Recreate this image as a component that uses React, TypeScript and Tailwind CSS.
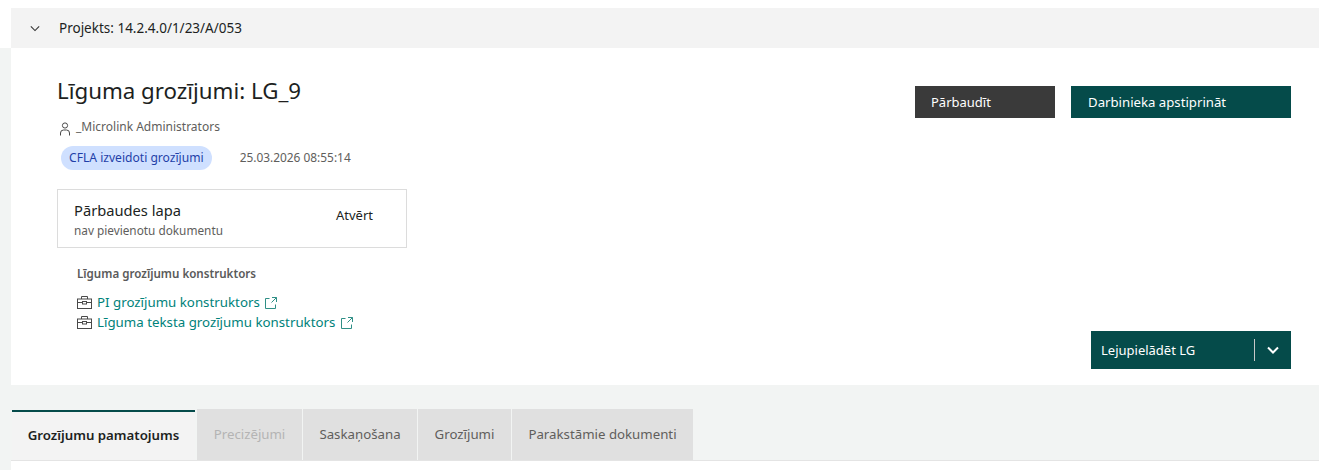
import React from "react";

const font = { fontFamily: '"Noto Sans", "Open Sans", sans-serif' };

function Chevron({ className }: { className?: string }) {
  return (
    <svg viewBox="0 0 12 8" className={className} fill="none" stroke="currentColor" strokeWidth="1.3">
      <path d="M1 1.5 L6 6.5 L11 1.5" />
    </svg>
  );
}

function Toolbox() {
  return (
    <svg width="15" height="13" viewBox="0 0 15 13" fill="none" stroke="#4a4a4a" strokeWidth="1" className="shrink-0 mt-[-1px]">
      <path d="M4.5 3 V0.5 H10.5 V3" />
      <rect x="0.5" y="3" width="14" height="9.5" />
      <path d="M0.5 6.5 H5.5 M9.5 6.5 H14.5" />
      <rect x="5.5" y="5.5" width="4" height="2.5" />
    </svg>
  );
}

function External() {
  return (
    <svg width="12" height="12" viewBox="0 0 12 12" fill="none" stroke="#2f8f86" strokeWidth="1" className="shrink-0 block">
      <path d="M4.5 1.5 H0.5 V11.5 H10.5 V7.5" />
      <path d="M7 0.5 H11.5 V5 M11.5 0.5 L6.5 5.5" />
    </svg>
  );
}

function Tab({ label, active, disabled, w }: { label: string; active?: boolean; disabled?: boolean; w: string }) {
  if (active) {
    return (
      <div className={`${w} h-[50px] mt-px mr-px bg-[#f3f3f3] border-t-2 border-[#054b4a] text-[13.25px] font-semibold text-[#201f1e] flex items-center justify-center`}>
        {label}
      </div>
    );
  }
  return (
    <div className={`${w} h-[51px] pt-px bg-[#e0e0e0] text-[13.25px] flex items-center justify-center ${disabled ? "text-[#b4b4b4]" : "text-[#605e5c]"}`}>
      {label}
    </div>
  );
}

export default function App() {
  return (
    <div style={font} className="w-[1319px] h-[470px] overflow-hidden bg-white">
      <div className="pt-2 pl-[11px]">
        <div className="h-10 bg-[#f3f3f3] flex items-center pl-[19px] text-[13.5px] text-[#201f1e]">
          <Chevron className="w-[10px] h-[7px] text-[#333333]" />
          <span className="ml-[19px] pt-px">Projekts: 14.2.4.0/1/23/A/053</span>
        </div>
      </div>

      <div className="bg-[#f2f4f3] pl-[11px] h-[422px] flex flex-col">
        <div className="h-[337px] bg-white flex justify-between pl-[46px] pr-[28px] pt-[38px] pb-4">
          <div className="flex flex-col">
            <h1 className="text-[22.3px] leading-[32px] -mt-[23px] pt-[12px] text-[#201f1e] h-[44px]">Līguma grozījumi: LG_9</h1>
            <div className="flex items-center mt-[10px] h-5 text-[12px] text-[#605e5c]">
              <svg width="10" height="14" viewBox="0 0 10 14" fill="none" stroke="#4a4a4a" className="ml-[3px] mt-[3px]">
                <circle cx="5" cy="3.5" r="2.6" />
                <path d="M0.5 13.5 V11 A3 3 0 0 1 3.5 8 H6.5 A3 3 0 0 1 9.5 11 V13.5" />
              </svg>
              <span className="ml-[6px]">_Microlink Administrators</span>
            </div>
            <div className="flex items-center mt-[9px] ml-[4px]">
              <span className="h-6 px-[8px] rounded-full bg-[#cfe0ff] text-[#1f3fa8] text-[12.1px] flex items-center">CFLA izveidoti grozījumi</span>
              <span className="ml-[28px] text-[11.9px] text-[#605e5c]">25.03.2026 08:55:14</span>
            </div>

            <div className="mt-[19px] w-[350px] h-[59px] border border-[#dcdcdc] flex items-center justify-between pl-4 pr-[33px]">
              <div>
                <div className="text-[14.7px] leading-[20px] text-[#201f1e]">Pārbaudes lapa</div>
                <div className="text-[11.8px] leading-[16px] text-[#605e5c] mt-[2px]">nav pievienotu dokumentu</div>
              </div>
              <span className="text-[13px] text-[#201f1e] mb-[6px]">Atvērt</span>
            </div>

            <div className="ml-5 mt-[18px] text-[11.6px] leading-4 font-semibold text-[#5a5a5a]">Līguma grozījumu konstruktors</div>
            <div className="ml-5 mt-[11px] flex items-center h-5 text-[13.3px] text-[#00827a]">
              <Toolbox />
              <span className="ml-[5px]">PI grozījumu konstruktors</span>
              <span className="ml-[5px]"><External /></span>
            </div>
            <div className="ml-5 flex items-center h-5 text-[13.3px] text-[#00827a]">
              <Toolbox />
              <span className="ml-[5px]">Līguma teksta grozījumu konstruktors</span>
              <span className="ml-[6px]"><External /></span>
            </div>
          </div>

          <div className="flex flex-col justify-between items-end">
            <div className="flex gap-4">
              <button className="w-[140px] h-8 pt-px bg-[#3a3a3a] text-white text-[13px] text-left pl-[16px]">Pārbaudīt</button>
              <button className="w-[220px] h-8 pt-px bg-[#054b4a] text-white text-[13.2px] text-left pl-[17px]">Darbinieka apstiprināt</button>
            </div>
            <button className="w-[200px] h-[38px] bg-[#054b4a] text-white text-[13px] flex items-center pl-[10px]">
              <span className="flex-1 text-left pt-px">Lejupielādēt LG</span>
              <span className="w-px h-[22px] bg-[#c8c8c8]" />
              <span className="w-[36px] flex justify-center">
                <svg viewBox="0 0 12 8" className="w-[12px] h-[8px]" fill="none" stroke="white" strokeWidth="2">
                  <path d="M1 1.5 L6 6.5 L11 1.5" />
                </svg>
              </span>
            </button>
          </div>
        </div>

        <div className="mt-6 h-[51px] flex items-start pl-px border-b border-[#e4e4e4] gap-px box-content">
          <Tab label="Grozījumu pamatojums" active w="w-[183px]" />
          <Tab label="Precizējumi" disabled w="w-[105px]" />
          <Tab label="Saskaņošana" w="w-[114px]" />
          <Tab label="Grozījumi" w="w-[93px]" />
          <Tab label="Parakstāmie dokumenti" w="w-[181px]" />
        </div>
        <div className="flex-1 bg-white" />
      </div>
    </div>
  );
}
